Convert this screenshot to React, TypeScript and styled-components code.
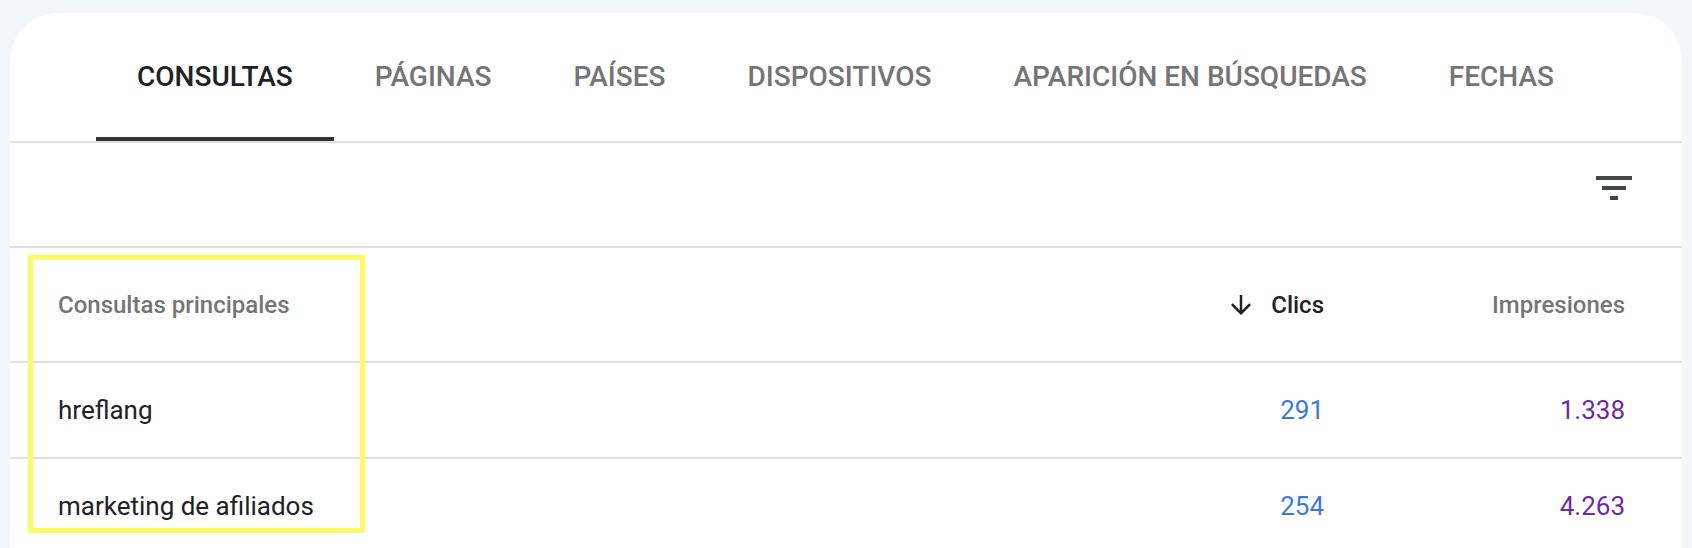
import React from "react";
import styled, { createGlobalStyle } from "styled-components";

const GlobalStyle = createGlobalStyle`
  html, body {
    margin: 0;
    padding: 0;
    overflow: hidden;
    background: #f3f6fb;
    font-family: Roboto, "Noto Sans", Arial, sans-serif;
  }
`;

const Page = styled.div`
  padding: 13px 10px 0 10px;
`;

const Card = styled.div`
  position: relative;
  background: #ffffff;
  border-radius: 48px 48px 0 0;
  overflow: hidden;
`;

const TabBar = styled.div`
  display: flex;
  padding-left: 86px;
  border-bottom: 2px solid #e0e0e0;
`;

const Tab = styled.div<{ $active?: boolean }>`
  box-sizing: border-box;
  height: 128px;
  padding: 3px 41px 0 41px;
  display: flex;
  align-items: center;
  font-size: 28px;
  font-weight: 500;
  text-transform: uppercase;
  color: ${(p) => (p.$active ? "#202124" : "#757575")};
  border-bottom: 4px solid ${(p) => (p.$active ? "#333333" : "transparent")};
  white-space: nowrap;
`;

const Toolbar = styled.div`
  box-sizing: border-box;
  height: 105px;
  display: flex;
  justify-content: flex-end;
  align-items: flex-start;
  padding: 21px 44px 0 0;
  border-bottom: 2px solid #e0e0e0;
`;

const IconButton = styled.div`
  width: 48px;
  height: 48px;
  color: #444746;
`;

const Row = styled.div<{ $header?: boolean }>`
  display: grid;
  grid-template-columns: 1fr 240px 301px;
  align-items: center;
  height: ${(p) => (p.$header ? "113px" : "94px")};
  padding: 0 57px 0 48px;
  border-bottom: 2px solid #e0e0e0;
`;

const HeadCell = styled.div<{ $right?: boolean; $active?: boolean }>`
  display: flex;
  align-items: center;
  justify-content: ${(p) => (p.$right ? "flex-end" : "flex-start")};
  gap: 15px;
  font-size: 24px;
  font-weight: 500;
  color: ${(p) => (p.$active ? "#202124" : "#757575")};
`;

const Cell = styled.div<{ $color?: string; $right?: boolean }>`
  font-size: 26px;
  color: ${(p) => p.$color || "#202124"};
  text-align: ${(p) => (p.$right ? "right" : "left")};
`;

const Highlight = styled.div`
  position: absolute;
  left: 18px;
  top: 242px;
  width: 337px;
  height: 278px;
  box-sizing: border-box;
  border: 5px solid #fcfc62;
  pointer-events: none;
`;

const FilterIcon = () => (
  <svg width="48" height="48" viewBox="0 0 24 24" fill="currentColor">
    <path d="M10 18h4v-2h-4v2zM3 6v2h18V6H3zm3 7h12v-2H6v2z" />
  </svg>
);

const ArrowDown = () => (
  <svg width="30" height="30" viewBox="0 0 24 24" fill="#202124">
    <path d="M20 12l-1.41-1.41L13 16.17V4h-2v12.17l-5.58-5.59L4 12l8 8 8-8z" />
  </svg>
);

const tabs = [
  "Consultas",
  "Páginas",
  "Países",
  "Dispositivos",
  "Aparición en búsquedas",
  "Fechas",
];

const rows = [
  { query: "hreflang", clicks: "291", impressions: "1.338" },
  { query: "marketing de afiliados", clicks: "254", impressions: "4.263" },
];

export default function App() {
  return (
    <>
      <GlobalStyle />
      <Page>
        <Card>
          <TabBar>
            {tabs.map((t, i) => (
              <Tab key={t} $active={i === 0}>
                {t}
              </Tab>
            ))}
          </TabBar>
          <Toolbar>
            <IconButton>
              <FilterIcon />
            </IconButton>
          </Toolbar>
          <Row $header>
            <HeadCell>Consultas principales</HeadCell>
            <HeadCell $right $active>
              <ArrowDown />
              Clics
            </HeadCell>
            <HeadCell $right>Impresiones</HeadCell>
          </Row>
          {rows.map((r) => (
            <Row key={r.query}>
              <Cell>{r.query}</Cell>
              <Cell $right $color="#3d78d8">
                {r.clicks}
              </Cell>
              <Cell $right $color="#6c2ba5">
                {r.impressions}
              </Cell>
            </Row>
          ))}
          <Highlight />
        </Card>
      </Page>
    </>
  );
}
